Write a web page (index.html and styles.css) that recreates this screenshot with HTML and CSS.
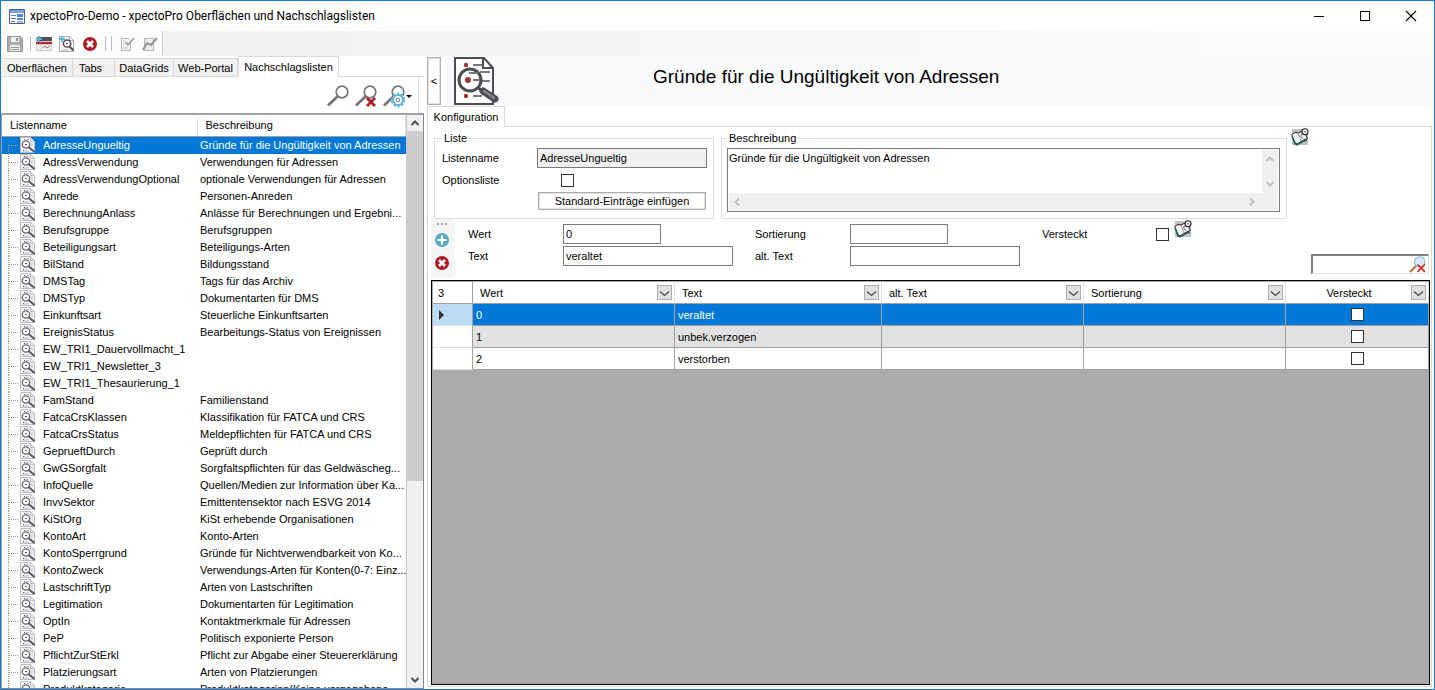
FILE: index.html
```html
<!DOCTYPE html>
<html lang="de">
<head>
<meta charset="utf-8">
<title>xpectoPro-Demo - xpectoPro Oberflächen und Nachschlagslisten</title>
<link rel="stylesheet" href="styles.css">
</head>
<body>
<svg class="defs" aria-hidden="true">
  <defs>
    <symbol id="doc-lens" viewBox="0 0 48 50">
      <path d="M2 2h29l9 10v36H2z" fill="#fff" stroke="#4b4b53" stroke-width="2"/>
      <path d="M30 2v10h10" fill="none" stroke="#4b4b53" stroke-width="2"/>
      <path d="M20 9h9M27 16h10M28 25h9M20 40h9" stroke="#777780" stroke-width="2"/>
      <circle cx="13" cy="9" r="2.2" fill="#a8332c"/><circle cx="13" cy="40" r="2.2" fill="#a8332c"/>
      <circle cx="17" cy="24" r="11" fill="#fff" stroke="#4b4b53" stroke-width="3"/>
      <path d="M16 17h9M20 24h7" stroke="#777780" stroke-width="2"/>
      <circle cx="15" cy="24" r="3" fill="#a8332c"/>
      <path d="M25 32l5 3" stroke="#4b4b53" stroke-width="3"/>
      <path d="M30 35L42 43" stroke="#4b4b53" stroke-width="7" stroke-linecap="round"/>
      <path d="M31 35L41 42" stroke="#85858d" stroke-width="2.500" stroke-linecap="round"/>
    </symbol>
    <symbol id="doc-mini" viewBox="0 0 16 16">
      <path d="M.5.5h10l4 4v11H.5z" fill="#f6f6f8" stroke="#bcbcc2"/>
      <path d="M10.500.5v4h4M6 2.500h3M11 7h2M11 9h2M3 14h6" fill="none" stroke="#bcbcc2"/>
      <circle cx="6" cy="7.500" r="3.700" fill="#fff" stroke="#666670" stroke-width="1.300"/>
      <path d="M9 10.500l5 4" stroke="#5c5c64" stroke-width="2.200" stroke-linecap="round"/>
      <path d="M4 2h1v1H4zM5 7h2v1H5zM3 13h1v1H3z" fill="#b04040"/>
    </symbol>
    <symbol id="delete" viewBox="0 0 16 16">
      <circle cx="8" cy="8" r="7" fill="#b01a24"/>
      <path d="M5 5l6 6M11 5l-6 6" stroke="#fff" stroke-width="2.600"/>
    </symbol>
    <symbol id="lens" viewBox="0 0 24 24">
      <circle cx="16" cy="8" r="5.800" fill="none" stroke="#74747c" stroke-width="1.700"/>
      <path d="M12 12L2 21.500" stroke="#74747c" stroke-width="2.800"/>
    </symbol>
    <symbol id="book" viewBox="0 0 18 18">
      <path d="M1 1h16v16H1z" fill="#c0c0c0"/>
      <path d="M.7 6.500L4 4.500l3 .5 3-1.500 3 0 3.500 7-4 1.500-6.500 4-2-1.500z" fill="#f4f4f4" stroke="#222"/>
      <path d="M7 5l3 8" stroke="#999"/>
      <path d="M1 8l3 8 2 1 7-4 3-1" fill="none" stroke="#1c5f60" stroke-width="1.400"/>
      <circle cx="14" cy="3.700" r="3" fill="#f4f4f4" stroke="#222" stroke-width="1.100"/>
      <path d="M13.500 3h1v1.500h-1z" fill="#333"/>
      <path d="M11 5.500c-2 2-1 4 1 5" fill="none" stroke="#555"/>
    </symbol>
    <symbol id="chev" viewBox="0 0 10 10">
      <path d="M1.500 7L5 3.500 8.500 7" fill="none" stroke="currentColor" stroke-width="2"/>
    </symbol>
    <symbol id="chev-thin" viewBox="0 0 11 11">
      <path d="M1 4.500l4.500 4 4.500-4" fill="none" stroke="currentColor" stroke-width="1.100"/>
    </symbol>
  </defs>
</svg>
<div class="window">
  <header class="titlebar">
    <svg class="app-icon" viewBox="0 0 16 15"><path d="M.5.5h15v14H.5z" fill="#fff" stroke="#44618f"/><path d="M1 1h14v3H1z" fill="#7f9fd2"/><path d="M2 6h5v1H2zM2 9h5v1H2zM2 12h4v1H2z" fill="#6a7a90"/><path d="M8 5h6v3H8zM8 9h6v2H8z" fill="#4a86e0"/><path d="M8 12h6v2H8z" fill="#a8b4c4"/></svg>
    <h1 class="caption">xpectoPro-Demo - xpectoPro Oberflächen und Nachschlagslisten</h1>
    <div class="window-buttons">
      <button aria-label="Minimieren"><svg viewBox="0 0 12 12"><path d="M1 6.500h10" stroke="#000"/></svg></button>
      <button aria-label="Maximieren"><svg viewBox="0 0 12 12"><path d="M1.500 1.500h9v9h-9z" stroke="#000" fill="none"/></svg></button>
      <button aria-label="Schließen"><svg viewBox="0 0 12 12"><path d="M1 1l10 10M11 1L1 11" stroke="#000" stroke-width="1.100"/></svg></button>
    </div>
  </header>
  <div class="toolbar">
    <div class="toolstrip">
      <button aria-label="Speichern"><svg viewBox="0 0 16 16"><path d="M.5.5h13l2 2v13H.5z" fill="#ababab" stroke="#959595"/><path d="M4 1h8v5H4zM3 9h10v6H3z" fill="#eee"/><path d="M9 2h2v3H9zM4 11h8v1H4zM4 13h8v1H4z" fill="#999"/></svg></button>
      <span class="sep"></span>
      <button aria-label="Neue Oberfläche"><svg viewBox="0 0 16 16"><path d="M0 1h16v14H0z" fill="#c9c9ce"/><path d="M1 1h15v4H1z" fill="#50505a"/><path d="M0 6h16v2H0z" fill="#b32d35"/><path d="M1 9h4v5H1zM6 9h9v5H6z" fill="#eeeef1"/><path d="M7 12l2-2 2 2 3-2" fill="none" stroke="#b87078"/><path d="M0 3h6M3 0v6" stroke="#59b3d6" stroke-width="1.800"/></svg></button>
      <button aria-label="Neue Liste"><svg viewBox="0 0 16 16"><path d="M.5.5h10l4 4v11H.5z" fill="#f6f6f8" stroke="#a8a8ae"/><path d="M10.500.5v4h4M11 8h2M3 14h6" fill="none" stroke="#a8a8ae"/><circle cx="8" cy="7.500" r="3.600" fill="#fff" stroke="#50505a" stroke-width="1.500"/><path d="M10.500 10.500l4 4" stroke="#50505a" stroke-width="2.200"/><path d="M7 7h2v1H7z" fill="#b03030"/><path d="M0 3h6M3 0v6" stroke="#59b3d6" stroke-width="1.800"/></svg></button>
      <button aria-label="Löschen"><svg><use href="#delete"/></svg></button>
      <span class="sep"></span><span class="sep near"></span>
      <button aria-label="Prüfen"><svg viewBox="0 0 16 16"><path d="M2.500 2.500h7l2 3v9h-9z" fill="#f6f6f6" stroke="#b4b4b4"/><path d="M4 5h2M4 8h2M4 12h5" stroke="#b4b4b4"/><path d="M7 6l2 3 6-7" fill="none" stroke="#9a9a9a" stroke-width="1.600"/></svg></button>
      <button aria-label="Auswerten"><svg viewBox="0 0 16 16"><path d="M2.500 2.500h9v12h-9z" fill="#eee" stroke="#b4b4b4"/><path d="M1 14l4-7 4 2 6-7" fill="none" stroke="#949494" stroke-width="2"/></svg></button>
    </div>
  </div>
  <main class="content">
    <aside class="sidebar">
      <nav class="tabs">
        <button class="tab t1">Oberflächen</button><button class="tab t2">Tabs</button><button class="tab t3">DataGrids</button><button class="tab t4">Web-Portal</button><button class="tab t5 active">Nachschlagslisten</button>
      </nav>
      <div class="searchbar">
        <button aria-label="Suchen"><svg viewBox="0 0 24 24"><use href="#lens"/></svg></button>
        <button aria-label="Suche aufheben"><svg viewBox="0 0 24 24"><use href="#lens"/><path d="M13 14l8 8M21 14l-8 8" stroke="#b01a24" stroke-width="2.800"/></svg></button>
        <button aria-label="Suchoptionen"><svg viewBox="0 0 24 24"><use href="#lens"/><circle cx="16" cy="16" r="6" fill="#fff" stroke="#59b3d6" stroke-width="2.400" stroke-dasharray="2.400 1.370"/><circle cx="16" cy="16" r="4.800" fill="#fff" stroke="#59b3d6" stroke-width="1.800"/><circle cx="16" cy="16" r="1.800" fill="none" stroke="#74747c"/></svg><span class="caret"></span></button>
      </div>
      <div class="listbox">
        <div class="list-view">
          <table class="list">
            <thead><tr><th>Listenname</th><th>Beschreibung</th></tr></thead>
            <tbody id="rows"></tbody>
          </table>
        </div>
        <div class="vscroll">
          <button aria-label="Nach oben"><svg><use href="#chev"/></svg></button>
          <div class="thumb"></div>
          <button class="down" aria-label="Nach unten"><svg><use href="#chev"/></svg></button>
        </div>
      </div>
    </aside>
    <section class="detail">
      <div class="detail-head">
        <button class="collapse" aria-label="Einklappen">&lt;</button>
        <div class="banner">
          <svg class="banner-icon"><use href="#doc-lens"/></svg>
          <h2>Gründe für die Ungültigkeit von Adressen</h2>
        </div>
      </div>
      <div class="tabs detail-tabs"><button class="tab active">Konfiguration</button></div>
      <div class="panel">
        <div class="groups">
          <fieldset class="group-list">
            <legend>Liste</legend>
            <label for="ln">Listenname</label><input id="ln" type="text" value="AdresseUngueltig" readonly>
            <label for="ol">Optionsliste</label><input id="ol" type="checkbox">
            <button class="insert">Standard-Einträge einfügen</button>
          </fieldset>
          <fieldset class="group-desc">
            <legend>Beschreibung</legend>
            <div class="memo">
              <textarea aria-label="Beschreibung">Gründe für die Ungültigkeit von Adressen</textarea>
              <div class="memo-v"><svg><use href="#chev"/></svg><svg class="down"><use href="#chev"/></svg></div>
              <div class="memo-h"><svg class="left"><use href="#chev"/></svg><svg class="right"><use href="#chev"/></svg></div>
            </div>
          </fieldset>
          <button class="book" aria-label="Übersetzen"><svg><use href="#book"/></svg></button>
        </div>
        <div class="entry">
          <div class="entry-tools">
            <span class="grip"></span>
            <button aria-label="Hinzufügen"><svg viewBox="0 0 16 16"><circle cx="8" cy="8" r="7" fill="#58a9c8"/><path d="M3.500 8h9M8 3.500v9" stroke="#fff" stroke-width="2.200"/></svg></button>
            <button aria-label="Entfernen"><svg><use href="#delete"/></svg></button>
          </div>
          <div class="entry-fields">
            <label for="w">Wert</label><input id="w" class="short" type="text" value="0">
            <label for="s">Sortierung</label><input id="s" class="short" type="text">
            <div class="hidden-flag"><label for="v">Versteckt</label><input id="v" type="checkbox"><button class="book" aria-label="Übersetzen"><svg><use href="#book"/></svg></button></div>
            <label for="t">Text</label><input id="t" type="text" value="veraltet">
            <label for="a">alt. Text</label><input id="a" type="text">
          </div>
          <div class="filter">
            <input type="text" aria-label="Filter">
            <svg viewBox="0 0 16 16"><path d="M7 9l-6 6" stroke="#b87a3c" stroke-width="2"/><circle cx="10" cy="5.500" r="4.800" fill="#d4ecfa" stroke="#8cb4d8"/><path d="M8 8l7 7M15 8l-7 7" stroke="#e8201c" stroke-width="1.600"/></svg>
          </div>
        </div>
        <div class="grid-box">
          <table class="grid">
            <colgroup><col class="c0"><col class="c1"><col class="c2"><col class="c3"><col class="c3"><col></colgroup>
            <thead><tr>
              <th>3</th>
              <th><div class="head"><span>Wert</span><button aria-label="Filter Wert"><svg><use href="#chev-thin"/></svg></button></div></th>
              <th><div class="head"><span>Text</span><button aria-label="Filter Text"><svg><use href="#chev-thin"/></svg></button></div></th>
              <th><div class="head"><span>alt. Text</span><button aria-label="Filter alt. Text"><svg><use href="#chev-thin"/></svg></button></div></th>
              <th><div class="head"><span>Sortierung</span><button aria-label="Filter Sortierung"><svg><use href="#chev-thin"/></svg></button></div></th>
              <th><div class="head mid"><span>Versteckt</span><button aria-label="Filter Versteckt"><svg><use href="#chev-thin"/></svg></button></div></th>
            </tr></thead>
            <tbody>
              <tr class="sel"><td class="rowhead"><span class="marker"></span></td><td>0</td><td>veraltet</td><td></td><td></td><td class="check"><input type="checkbox" aria-label="Versteckt 0"></td></tr>
              <tr class="alt"><td class="rowhead"></td><td>1</td><td>unbek.verzogen</td><td></td><td></td><td class="check"><input type="checkbox" aria-label="Versteckt 1"></td></tr>
              <tr><td class="rowhead"></td><td>2</td><td>verstorben</td><td></td><td></td><td class="check"><input type="checkbox" aria-label="Versteckt 2"></td></tr>
            </tbody>
          </table>
        </div>
      </div>
    </section>
  </main>
</div>
<script src="app.js"></script>
</body>
</html>
```
FILE: styles.css
```css
* { box-sizing: border-box; }
body { margin: 0; font: 11px/16px "Liberation Sans", Arial, sans-serif; color: #000; background: #fff; }
button, input, textarea { font: inherit; color: inherit; margin: 0; }
button { background: none; border: 0; padding: 0; }
svg { display: block; }
.defs { position: absolute; width: 0; height: 0; }

.window { height: 100vh; display: flex; flex-direction: column; border: 1px solid #1979ca; overflow: hidden; }
.titlebar { flex: none; height: 30px; display: flex; align-items: center; padding-left: 8px; }
.app-icon { width: 16px; height: 15px; }
.caption { flex: 1; margin: 0 0 0 5px; font: 12px/16px Roboto, "Open Sans", sans-serif; }
.window-buttons { display: flex; }
.window-buttons button { width: 46px; height: 30px; display: flex; justify-content: center; align-items: center; }
.window-buttons svg { width: 12px; height: 12px; }

.toolbar { flex: none; height: 25px; background: linear-gradient(90deg, #f0f0f0, #fcfcfc); }
.toolstrip { width: 162px; height: 25px; display: flex; align-items: center; gap: 7px; padding-left: 6px; background: #fcfcfc; border-right: 1px solid #ccc; border-radius: 0 3px 3px 0; }
.toolstrip svg { width: 16px; height: 16px; }
.sep { width: 1px; height: 15px; margin-right: -2px; background: #bdbdbd; }
.sep.near { margin: 0; }

.content { flex: 1; min-height: 0; display: flex; }
.sidebar { width: 423px; flex: none; display: flex; flex-direction: column; }
.tabs { flex: none; display: flex; align-items: flex-end; height: 21px; padding-left: 1px; }
.tabs::after { content: ""; flex: 1; align-self: stretch; border-bottom: 1px solid #d9d9d9; }
.tab { height: 19px; border: 1px solid #d9d9d9; border-left: 0; background: #f0f0f0; white-space: nowrap; padding: 0; }
.tab.active { height: 21px; background: #fff; border-left: 1px solid #d9d9d9; border-bottom: 0; }
.t1 { width: 71px; } .t2 { width: 42px; padding-right: 6px; } .t3 { width: 59px; } .t4 { width: 64px; } .t5 { width: 101px; }
.searchbar { flex: none; height: 36px; margin-right: 5px; display: flex; justify-content: flex-end; align-items: center; gap: 4px; padding: 2px 6px 0 0; border-right: 1px solid #ddd; }
.searchbar button { display: flex; align-items: center; }
.searchbar svg { width: 24px; height: 24px; }
.caret { border: 3px solid transparent; border-top-color: #000; border-bottom: 0; }

.listbox { flex: 1; min-height: 0; display: flex; border: 1px solid #828790; border-top: 2px solid #a0a0a8; border-left-color: #a0a0a0; }
.list-view { flex: 1; min-width: 0; overflow: hidden; }
.list { width: 100%; table-layout: fixed; border-collapse: collapse; }
.list th { height: 21px; padding: 0 9px 0 8px; font-weight: normal; text-align: left; border-bottom: 1px solid #a0a0a0; border-right: 1px solid #e0e0e0; }
.list th:first-child { width: 195px; }
.list td { height: 17px; line-height: 17px; padding: 0 0 0 3px; white-space: nowrap; }
.list td:first-child { padding: 0; }
.list .sel { background: #0078d7; color: #fff; }
.node { display: flex; align-items: center; height: 17px; padding-left: 6px; }
.branch { width: 10px; height: 17px; border-left: 1px dotted #999; background: linear-gradient(90deg, #999 50%, transparent 50%) 0 8px / 2px 1px repeat-x; }
.sel .branch { height: 9px; align-self: flex-end; background-position: 0 0; }
.node svg { width: 16px; height: 16px; margin: 0 7px 0 2px; flex: none; }
.vscroll { width: 17px; background: #f0f0f0; border-left: 1px solid #c8c8c8; display: flex; flex-direction: column; color: #505050; }
.vscroll button { height: 16px; display: flex; align-items: center; justify-content: center; }
.vscroll svg { width: 10px; height: 10px; }
.thumb { height: 61%; background: #cdcdcd; }
.vscroll .down { margin-top: auto; }
.down svg, svg.down { transform: rotate(180deg); }

.detail { flex: 1; min-width: 0; display: flex; flex-direction: column; padding: 0 2px 2px 3px; }
.detail-head { flex: none; display: flex; height: 50px; gap: 4px; }
.collapse { width: 14px; height: 48px; margin-top: 1px; border: 1px solid #adadad; box-shadow: inset 0 0 0 1px #e1e1e1; }
.banner { flex: 1; display: flex; align-items: center; background: #f9fafc; padding-left: 8px; }
.banner-icon { width: 48px; height: 50px; }
.banner h2 { margin: 0 0 8px 152px; font-size: 19px; line-height: 24px; font-weight: normal; }
.detail-tabs { padding-left: 0; }
.detail-tabs .tab { width: 78px; }
.panel { flex: 1; min-height: 0; display: flex; flex-direction: column; border: 1px solid #d9d9d9; border-top: 0; padding: 5px 1px 1px 3px; }
.groups { display: flex; padding-left: 3px; }
fieldset { margin: 0; min-width: 0; border: 1px solid #dcdcdc; padding: 0; height: 87px; }
legend { padding: 0 2px; line-height: 13px; }
input[type=text], textarea { height: 20px; border: 1px solid #7a7a7a; background: #fff; padding: 0 2px; border-radius: 0; outline: 0; }
input[type=checkbox] { appearance: none; width: 13px; height: 13px; border: 1px solid #333; background: #fff; }
.group-list { width: 280px; margin-right: 7px; display: grid; grid-template-columns: 95px 170px; grid-template-rows: 20px 20px 18px; row-gap: 2px; align-items: center; padding: 3px 0 0 7px; }
.group-list input[type=text] { background: #f0f0f0; }
.group-list input[type=checkbox] { margin-left: 24px; }
.insert { grid-column: 2; width: 168px; height: 18px; margin-left: 1px; border: 1px solid #adadad; box-shadow: inset 0 0 0 1px #e1e1e1; line-height: 14px; }
.group-desc { width: 566px; padding: 3px 6px 6px 5px; }
.memo { height: 64px; border: 1px solid #7a7a7a; padding: 1px; display: grid; grid-template: 1fr 17px / 1fr 16px; color: #c0c0c0; }
.memo textarea { height: auto; border: 0; padding: 0; resize: none; white-space: pre; overflow: hidden; color: #000; }
.memo svg { width: 10px; height: 10px; }
.memo-v { background: #f0f0f0; display: flex; flex-direction: column; justify-content: space-between; align-items: center; padding: 4px 0; }
.memo-h { grid-column: 1 / 3; background: #f0f0f0; display: flex; justify-content: space-between; align-items: center; padding: 0 21px 0 3px; }
.left { transform: rotate(-90deg); }
.right { transform: rotate(90deg); }
.book { align-self: flex-start; }
.groups .book { margin: -4px 0 0 4px; }
.book svg { width: 18px; height: 18px; }

.entry { display: flex; height: 61px; }
.entry-tools { width: 24px; height: 58px; background: #f5f5f5; border-radius: 3px; display: flex; flex-direction: column; align-items: center; gap: 7px; padding: 4px 2px 0 0; }
.entry-tools svg { width: 16px; height: 16px; }
.grip { width: 11px; height: 2px; background: linear-gradient(90deg, #aaa 50%, transparent 50%) 0 0 / 4px 2px; }
.entry-fields { flex: 1; display: grid; grid-template-columns: 95px 192px 95px 192px 1fr; grid-template-rows: 20px 20px; row-gap: 2px; padding: 5px 0 0 13px; align-items: center; }
.entry-fields input[type=text] { width: 170px; }
.entry-fields input.short { width: 98px; }
.hidden-flag { display: flex; align-items: center; height: 20px; }
.hidden-flag label { width: 114px; }
.hidden-flag .book { margin: -4px 0 0 5px; }
.filter { align-self: flex-end; margin: 0 1px 6px 0; width: 118px; height: 20px; position: relative; }
.filter input { width: 100%; border: 1px solid #e3e3e3; border-top: 2px solid #808080; border-left: 2px solid #808080; }
.filter svg { position: absolute; right: 3px; top: 2px; width: 17px; height: 17px; }

.grid-box { flex: 1; min-height: 0; border: 1px solid #000; background: #ababab; padding: 1px 0 0 1px; overflow: hidden; }
.grid { width: 100%; table-layout: fixed; border-collapse: separate; border-spacing: 0; }
.c0 { width: 40px; } .c1 { width: 202px; } .c2 { width: 207px; } .c3 { width: 202px; }
.grid th { height: 22px; padding: 0 0 0 5px; background: #fff; font-weight: normal; text-align: left; border-bottom: 1px solid #a0a0a0; border-right: 1px solid #e0e0e0; }
.grid td { height: 22px; padding: 0 3px; background: #fff; border-bottom: 1px solid #a0a0a0; border-right: 1px solid #a0a0a0; }
.grid th:first-child { border-right-color: #a0a0a0; }
.head { display: flex; justify-content: space-between; align-items: center; padding: 0 2px; }
.head button { width: 15px; height: 15px; background: #e1e1e1; border: 1px solid #adadad; display: flex; align-items: center; justify-content: center; color: #444; }
.head svg { width: 11px; height: 11px; }
.head.mid span { flex: 1; text-align: center; padding-right: 6px; }
.grid .alt td { background: #e1e1e1; }
.grid .sel td { background: #0078d7; color: #fff; }
.grid tr .rowhead { background: #fff; border-bottom-color: #e0e0e0; padding-left: 6px; }
.grid .sel .rowhead { background: #bcdcf4; }
.marker { display: block; width: 0; border: 5px solid transparent; border-left-color: #333; border-right: 0; }
.check input { display: block; margin: 0 auto; }
```
FILE: app.js
```js
const lists = [
  ["AdresseUngueltig", "Gründe für die Ungültigkeit von Adressen"],
  ["AdressVerwendung", "Verwendungen für Adressen"],
  ["AdressVerwendungOptional", "optionale Verwendungen für Adressen"],
  ["Anrede", "Personen-Anreden"],
  ["BerechnungAnlass", "Anlässe für Berechnungen und Ergebni..."],
  ["Berufsgruppe", "Berufsgruppen"],
  ["Beteiligungsart", "Beteiligungs-Arten"],
  ["BilStand", "Bildungsstand"],
  ["DMSTag", "Tags für das Archiv"],
  ["DMSTyp", "Dokumentarten für DMS"],
  ["Einkunftsart", "Steuerliche Einkunftsarten"],
  ["EreignisStatus", "Bearbeitungs-Status von Ereignissen"],
  ["EW_TRI1_Dauervollmacht_1", ""],
  ["EW_TRI1_Newsletter_3", ""],
  ["EW_TRI1_Thesaurierung_1", ""],
  ["FamStand", "Familienstand"],
  ["FatcaCrsKlassen", "Klassifikation für FATCA und CRS"],
  ["FatcaCrsStatus", "Meldepflichten für FATCA und CRS"],
  ["GeprueftDurch", "Geprüft durch"],
  ["GwGSorgfalt", "Sorgfaltspflichten für das Geldwäscheg..."],
  ["InfoQuelle", "Quellen/Medien zur Information über Ka..."],
  ["InvvSektor", "Emittentensektor nach ESVG 2014"],
  ["KiStOrg", "KiSt erhebende Organisationen"],
  ["KontoArt", "Konto-Arten"],
  ["KontoSperrgrund", "Gründe für Nichtverwendbarkeit von Ko..."],
  ["KontoZweck", "Verwendungs-Arten für Konten(0-7: Einz..."],
  ["LastschriftTyp", "Arten von Lastschriften"],
  ["Legitimation", "Dokumentarten für Legitimation"],
  ["OptIn", "Kontaktmerkmale für Adressen"],
  ["PeP", "Politisch exponierte Person"],
  ["PflichtZurStErkl", "Pflicht zur Abgabe einer Steuererklärung"],
  ["Platzierungsart", "Arten von Platzierungen"],
  ["Produktkategorie", "Produktkategorien(Keine vorgegebene..."]
];
document.getElementById("rows").innerHTML = lists.map(([name, text], i) =>
  `<tr${i === 0 ? ' class="sel"' : ""}><td><div class="node"><span class="branch"></span><svg><use href="#doc-mini"/></svg>${name}</div></td><td>${text}</td></tr>`
).join("");
```
